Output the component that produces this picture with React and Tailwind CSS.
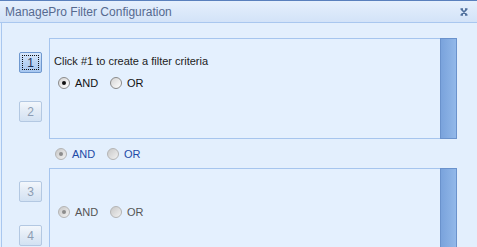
import React from 'react';

const Radio = ({ checked, disabled }) => (
  <span
    className={`relative flex h-[12px] w-[12px] shrink-0 items-center justify-center rounded-full border ${
      disabled
        ? 'border-[#b4b4b4] bg-gradient-to-br from-[#c8c8c8] to-[#f2f2f2]'
        : 'border-[#8a8a8a] bg-gradient-to-br from-[#d4d4d4] to-[#ffffff]'
    }`}
  >
    {checked && (
      <span className={`h-[4px] w-[4px] rounded-full ${disabled ? 'bg-[#8c8c8c]' : 'bg-[#111]'}`} />
    )}
  </span>
);

const AndOr = ({ tone = 'normal', className = '' }) => {
  const disabled = tone !== 'normal';
  const text = tone === 'blue' ? 'text-[#1e4aa6]' : tone === 'gray' ? 'text-[#555]' : 'text-[#111]';
  return (
    <div className={`flex h-[14px] items-center text-[11px] ${text} ${className}`}>
      <Radio checked disabled={disabled} />
      <span className="ml-[5px] w-[35px]">AND</span>
      <Radio disabled={disabled} />
      <span className="ml-[5px]">OR</span>
    </div>
  );
};

const NumButton = ({ n, active, className = '' }) =>
  active ? (
    <div
      className={`flex h-[21px] w-[23px] items-center justify-center rounded-[2px] border border-[#6f98cf] bg-gradient-to-b from-[#d9e8fb] via-[#b9d3f4] to-[#a6c6f0] p-[2px] ${className}`}
    >
      <div className="flex h-full w-full items-center justify-center border border-dotted border-[#111] text-[12px] text-[#1c2f55]">
        {n}
      </div>
    </div>
  ) : (
    <div
      className={`flex h-[21px] w-[23px] items-center justify-center rounded-[2px] border border-[#b3c8e2] bg-gradient-to-b from-[#f3f7fc] via-[#e2ebf6] to-[#d3e2f3] text-[12px] text-[#8d9db3] ${className}`}
    >
      {n}
    </div>
  );

const SideBar = () => (
  <div className="w-[17px] shrink-0 border border-[#6a92cc] bg-gradient-to-r from-[#7aa3dc] to-[#92b8e9]" />
);

export default function App() {
  return (
    <div className="h-[247px] w-[477px] overflow-hidden bg-[#e3effd] font-['Liberation_Sans',Arial,sans-serif]">
      {/* title bar */}
      <div className="flex h-[23px] items-center justify-between border-t border-b border-t-[#5a80bd] border-b-[#a9c7ef] bg-gradient-to-b from-[#e6f0fd] via-[#dce9fa] to-[#d3e3f8] pl-[5px] pr-[9px]">
        <span className="text-[12px] text-[#566a90]">ManagePro Filter Configuration</span>
        <svg width="8" height="8" viewBox="0 0 8 8">
          <path d="M1 1 L7 7 M7 1 L1 7 M0.5 1 H3 M5 1 H7.5 M0.5 7 H3 M5 7 H7.5" stroke="#4f6f9c" strokeWidth="1.6" />
        </svg>
      </div>

      {/* body */}
      <div className="ml-[1px] h-full border-l border-[#a9c7ef] pt-[15px]">
        <div className="flex">
          <div className="flex w-[47px] shrink-0 flex-col pl-[17px] pt-[14px]">
            <NumButton n="1" active />
            <NumButton n="2" className="mt-[28px]" />
          </div>
          <div className="flex h-[101px]">
            <div className="w-[391px] border-t border-b border-l border-[#a6c5ee] bg-[#e4f0fe] pl-[4px] pt-[16px]">
              <div className="h-[13px] text-[11px] leading-[13px] text-[#222]">Click #1 to create a filter criteria</div>
              <AndOr className="ml-[4px] mt-[8px]" />
            </div>
            <SideBar />
          </div>
        </div>

        <div className="flex h-[29px] items-center pl-[53px] pt-[1px]">
          <AndOr tone="blue" />
        </div>

        <div className="flex">
          <div className="flex w-[47px] shrink-0 flex-col pl-[17px] pt-[13px]">
            <NumButton n="3" />
            <NumButton n="4" className="mt-[23px]" />
          </div>
          <div className="flex h-[120px]">
            <div className="w-[391px] border-t border-l border-[#a6c5ee] bg-[#e4f0fe] pl-[8px] pt-[36px]">
              <AndOr tone="gray" />
            </div>
            <SideBar />
          </div>
        </div>
      </div>
    </div>
  );
}
